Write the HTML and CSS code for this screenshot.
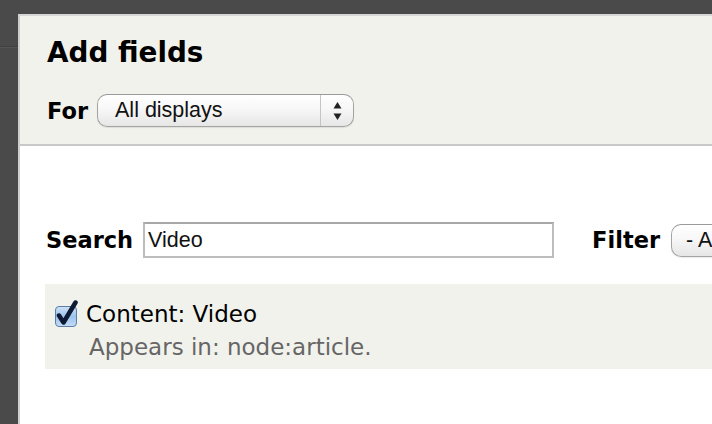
FILE: index.html
```html
<!DOCTYPE html>
<html>
<head>
<meta charset="utf-8">
<link rel="stylesheet" href="styles.css">
</head>
<body>
<div class="panel">
  <div class="header">
    <h1 class="title">Add fields</h1>
    <div class="for-row">
      <span class="label">For</span>
      <div class="select">
        <span class="select-text">All displays</span>
        <span class="select-arrows">
          <svg width="9" height="20" viewBox="0 0 9 20"><path d="M4.5 1 L8.5 7.5 L0.5 7.5 Z" fill="#222"/><path d="M4.5 19 L8.5 12.5 L0.5 12.5 Z" fill="#222"/></svg>
        </span>
      </div>
    </div>
  </div>
  <div class="content">
    <div class="search-row">
      <span class="label">Search</span>
      <div class="input">Video</div>
      <span class="label filter-label">Filter</span>
      <div class="select small">
        <span class="select-text">- All -</span>
      </div>
    </div>
    <div class="result">
      <div class="result-line">
        <span class="checkbox">
          <svg width="26" height="28" viewBox="0 0 26 28">
            <defs>
              <linearGradient id="cb" x1="0" y1="0" x2="0" y2="1">
                <stop offset="0" stop-color="#cfe2f7"/>
                <stop offset="0.5" stop-color="#9cc3ec"/>
                <stop offset="1" stop-color="#c6ddf6"/>
              </linearGradient>
            </defs>
            <rect x="1.5" y="6.5" width="21" height="20" rx="3.5" fill="url(#cb)" stroke="#5d7ea8" stroke-width="1"/>
            <path d="M5 15.5 L9.5 22.5 L21.5 2.5" fill="none" stroke="#0e1a33" stroke-width="4.5" stroke-linecap="round" stroke-linejoin="round"/>
          </svg>
        </span>
        <span class="result-title">Content: Video</span>
      </div>
      <div class="result-desc">Appears in: node:article.</div>
    </div>
  </div>
</div>
</body>
</html>
```
FILE: styles.css
```css
html, body {
  margin: 0;
  height: 100%;
}
body {
  background: linear-gradient(to bottom, #4a4a4a 0, #4a4a4a 46px, #3f3f3f 46px, #3f3f3f 47px, #555 47px, #555 48px, #4a4a4a 48px);
  padding: 14px 0 0 18px;
  box-sizing: border-box;
  overflow: hidden;
  font-family: "DejaVu Sans", sans-serif;
}
.panel {
  background: #fff;
  border-left: 2px solid #cfcfcf;
  border-top: 2px solid #d6d6d6;
  height: 100%;
  box-sizing: border-box;
  overflow: hidden;
}
.header {
  background: #f2f2ec;
  border-bottom: 2px solid #c8c8c8;
  height: 130px;
  padding: 20px 0 0 27px;
  box-sizing: border-box;
}
.title {
  margin: 0;
  font-size: 27.8px;
  font-weight: bold;
  line-height: 34px;
  color: #000;
}
.for-row {
  display: flex;
  align-items: center;
  gap: 9px;
  margin-top: 24px;
}
.label {
  font-weight: bold;
  font-size: 22.5px;
  color: #000;
  flex: none;
}
.select {
  flex: none;
  width: 257px;
  height: 33px;
  box-sizing: border-box;
  border: 1px solid #a4a4a4;
  border-top-color: #9a9a9a;
  border-radius: 10px;
  background: linear-gradient(to bottom, #ffffff 0%, #f7f7f7 45%, #e6e6e6 100%);
  box-shadow: inset 0 1px 0 #fff, 0 1px 1px rgba(0,0,0,0.08);
  display: flex;
  align-items: center;
  font-family: "Liberation Sans", Arial, sans-serif;
  font-size: 21.5px;
  color: #111;
}
.select-text {
  flex: 1;
  padding-left: 17px;
  white-space: nowrap;
}
.select-arrows {
  width: 32px;
  align-self: stretch;
  border-left: 1px solid #c4c4c4;
  display: flex;
  align-items: center;
  justify-content: center;
}
.select-arrows svg {
  display: block;
}
.content {
  padding: 76px 0 0 26px;
}
.search-row {
  display: flex;
  align-items: center;
}
.input {
  flex: none;
  margin-left: 10px;
  width: 411px;
  height: 36px;
  box-sizing: border-box;
  border: 2px solid #bdbdbd;
  border-top-color: #a8a8a8;
  background: #fff;
  font-family: "Liberation Sans", Arial, sans-serif;
  font-size: 21.5px;
  color: #111;
  padding-left: 3px;
  display: flex;
  align-items: center;
}
.filter-label {
  margin-left: 38px;
}
.select.small {
  margin-left: 11px;
  width: 120px;
  height: 33px;
}
.select.small .select-text {
  padding-left: 14px;
}
.result {
  margin-top: 26px;
  background: #f2f2ec;
  height: 85px;
  box-sizing: border-box;
  padding: 16px 0 0 9px;
  margin-left: -1px;
}
.result-line {
  display: flex;
  align-items: flex-end;
  gap: 6px;
}
.checkbox svg {
  display: block;
}
.result-title {
  font-size: 23px;
  color: #000;
  line-height: 28px;
}
.result-desc {
  font-size: 23px;
  color: #666;
  padding-left: 35px;
  line-height: 34px;
  margin-top: 2px;
}
```
